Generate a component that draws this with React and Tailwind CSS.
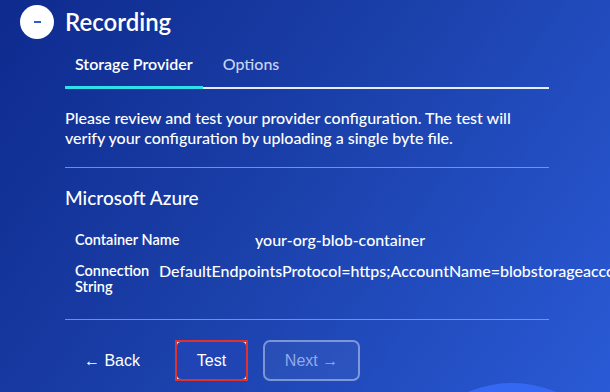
import React from 'react';

const fields = [
  { label: 'Container Name', value: 'your-org-blob-container', labelW: 'w-[180px]' },
  { label: 'Connection String', value: 'DefaultEndpointsProtocol=https;AccountName=blobstorageaccount;AccountKey=xxxxxxxx', labelW: 'w-[84px]' },
];

const App = () => {
  return (
    <div className="relative w-[610px] h-[392px] overflow-hidden bg-[linear-gradient(125deg,#0e2a8e_0%,#1a3fa8_45%,#2a5ad6_100%)] font-['Lato','Noto_Sans',sans-serif] text-white">
      {/* Header */}
      <div className="flex items-center pl-[20px] pt-[5px]">
        <div className="w-[34px] h-[34px] rounded-full bg-white flex items-center justify-center">
          <div className="w-[7px] h-[1.5px] bg-[#2f5bd0]" />
        </div>
        <h1 className="ml-[11px] text-[24px] font-semibold leading-[30px]">Recording</h1>
      </div>

      {/* Tabs */}
      <div className="ml-[65px] mt-[14px] w-[484px] flex border-b-2 border-white/90">
        <div className="px-[10px] pb-[11px] -mb-[2px] border-b-[3px] border-[#2fe0ec] text-[16px] font-semibold leading-[22px]">
          Storage Provider
        </div>
        <div className="ml-[20px] pb-[11px] text-[16px] font-medium leading-[22px] text-[#c9d3f2]">Options</div>
      </div>

      {/* Body */}
      <div className="ml-[65px] w-[484px]">
        <p className="mt-[19px] text-[16px] font-medium leading-[20px]">
          Please review and test your provider configuration. The test will verify your configuration by uploading a single byte file.
        </p>
        <div className="mt-[19px] h-px bg-[#8ea3e0]/80" />
        <h2 className="mt-[18px] text-[19px] font-medium leading-[24px]">Microsoft Azure</h2>

        <div className="mt-[20px] pl-[10px] flex flex-col gap-[11px]">
          {fields.map((f) => (
            <div key={f.label} className="flex items-start">
              <div className={`${f.labelW} shrink-0 text-[14.5px] font-semibold leading-[16px] pt-[2px]`}>{f.label}</div>
              <div className="whitespace-nowrap text-[16px] font-medium leading-[20px]">{f.value}</div>
            </div>
          ))}
        </div>

        <div className="mt-[24px] h-px bg-[#8ea3e0]/80" />

        {/* Actions */}
        <div className="mt-[20px] flex items-center font-['Liberation_Sans',Arial,sans-serif]">
          <button className="ml-[19px] text-[16px] text-white">&larr; Back</button>
          <div className="ml-[35px] border-2 border-[#e0312f] bg-white/90">
            <button className="block w-[69px] h-[37px] rounded-[4px] bg-[#2044b4] text-[16px] text-white">Test</button>
          </div>
          <button className="ml-[15px] w-[97px] h-[41px] rounded-[7px] border-2 border-white/40 bg-white/5 text-[16px] text-[#93a9ea]">
            Next &rarr;
          </button>
        </div>
      </div>

      {/* Decorative circle */}
      <div className="absolute left-[400px] top-[383px] w-[224px] h-[224px] rounded-full bg-[#3568f2]" />
    </div>
  );
};

export default App;
